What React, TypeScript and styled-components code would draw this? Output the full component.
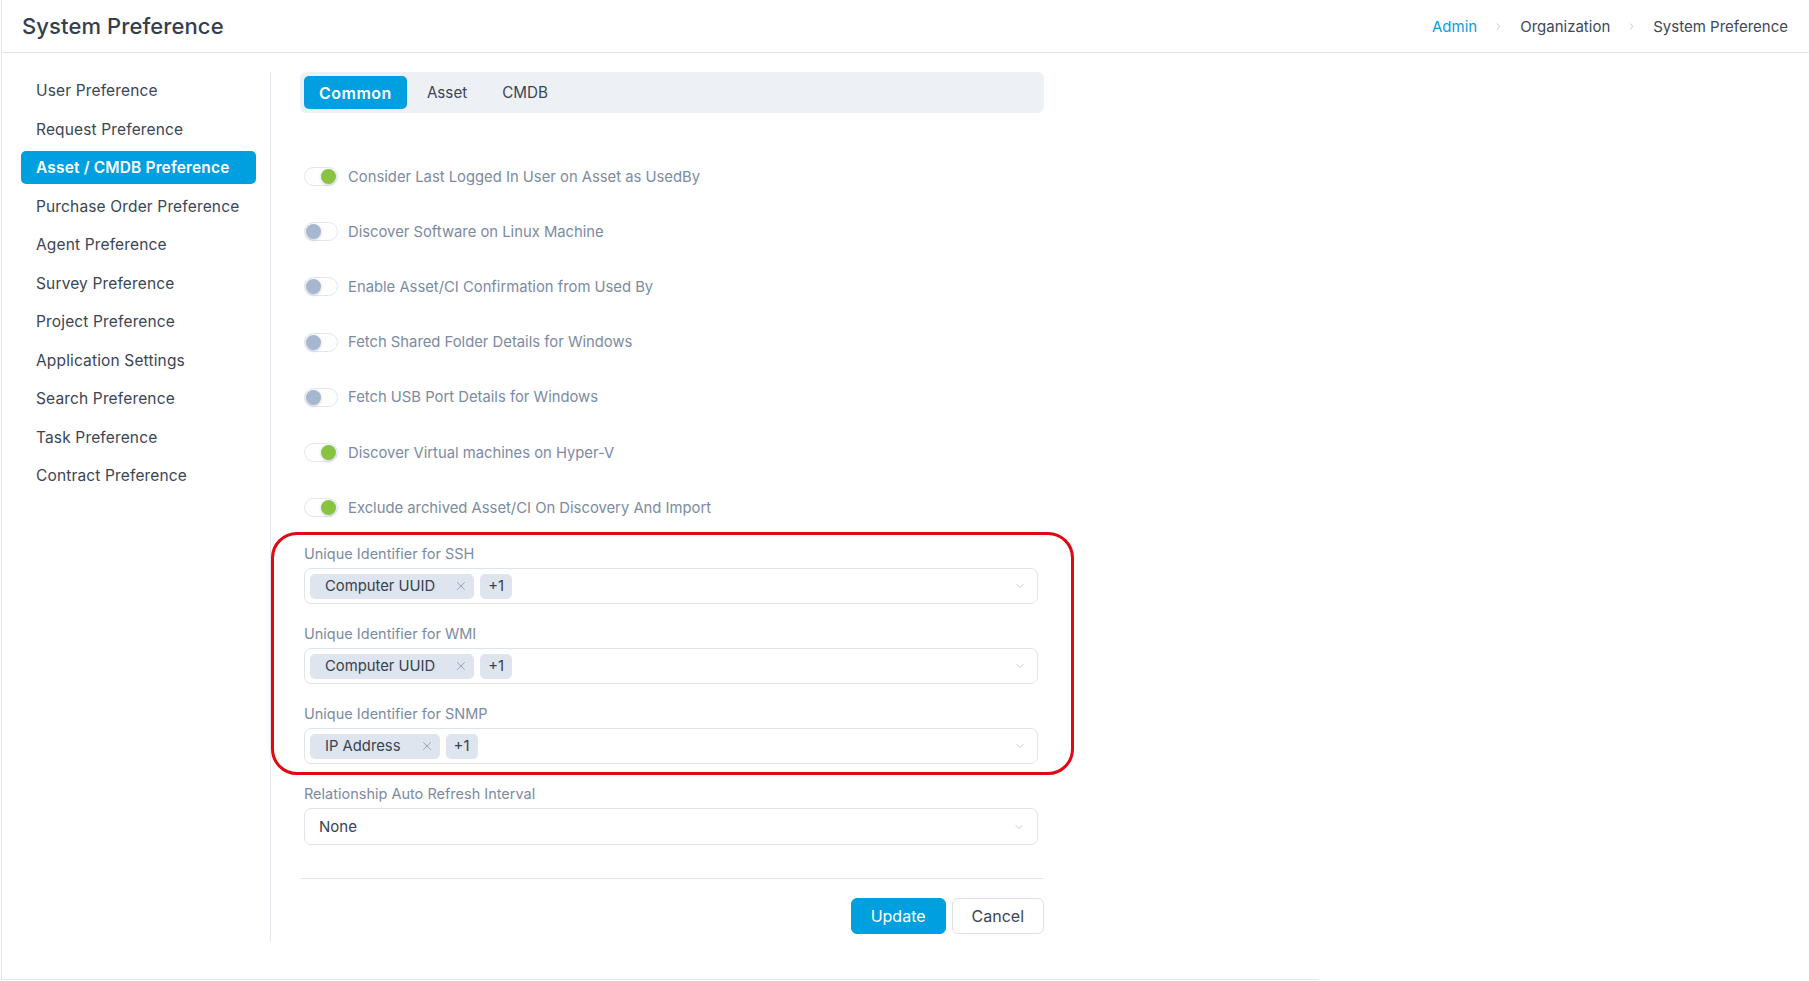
import styled, { createGlobalStyle } from "styled-components"
import { ChevronDown, ChevronRight, X } from "lucide-react"

const GlobalStyle = createGlobalStyle`
  body {
    margin: 0;
    background: #fff;
    font-family: Inter, "Open Sans", sans-serif;
    color: #364152;
  }
  * { box-sizing: border-box; }
`

const menu = [
  "User Preference",
  "Request Preference",
  "Asset / CMDB Preference",
  "Purchase Order Preference",
  "Agent Preference",
  "Survey Preference",
  "Project Preference",
  "Application Settings",
  "Search Preference",
  "Task Preference",
  "Contract Preference",
]

const toggles = [
  { label: "Consider Last Logged In User on Asset as UsedBy", on: true },
  { label: "Discover Software on Linux Machine", on: false },
  { label: "Enable Asset/CI Confirmation from Used By", on: false },
  { label: "Fetch Shared Folder Details for Windows", on: false },
  { label: "Fetch USB Port Details for Windows", on: false },
  { label: "Discover Virtual machines on Hyper-V", on: true },
  { label: "Exclude archived Asset/CI On Discovery And Import", on: true },
]

const identifiers = [
  { label: "Unique Identifier for SSH", value: "Computer UUID" },
  { label: "Unique Identifier for WMI", value: "Computer UUID" },
  { label: "Unique Identifier for SNMP", value: "IP Address" },
]

const App = () => {
  return (
    <Page>
      <GlobalStyle />
      <Header>
        <Title>System Preference</Title>
        <Crumbs>
          <Crumb $link>Admin</Crumb>
          <ChevronRight size={11} color="#a6b3c4" strokeWidth={1.6} />
          <Crumb>Organization</Crumb>
          <ChevronRight size={11} color="#a6b3c4" strokeWidth={1.6} />
          <Crumb>System Preference</Crumb>
        </Crumbs>
      </Header>

      <Body>
        <Sidebar>
          {menu.map((m) => (
            <MenuItem key={m} $active={m === "Asset / CMDB Preference"}>
              {m}
            </MenuItem>
          ))}
        </Sidebar>

        <Content>
          <Tabs>
            <Tab $active>Common</Tab>
            <Tab>Asset</Tab>
            <Tab>CMDB</Tab>
          </Tabs>

          <ToggleList>
            {toggles.map((t) => (
              <ToggleRow key={t.label}>
                <Track>
                  <Knob $on={t.on} />
                </Track>
                <ToggleLabel>{t.label}</ToggleLabel>
              </ToggleRow>
            ))}
          </ToggleList>

          <Fields>
            <Highlighted>
              {identifiers.map((f) => (
                <Field key={f.label}>
                  <FieldLabel>{f.label}</FieldLabel>
                  <SelectBox>
                    <Chips>
                      <Chip>
                        {f.value}
                        <X size={14} color="#8a97a9" strokeWidth={1.4} />
                      </Chip>
                      <Chip $count>+1</Chip>
                    </Chips>
                    <ChevronDown size={12} color="#a9b6c8" strokeWidth={1.5} />
                  </SelectBox>
                </Field>
              ))}
            </Highlighted>

            <Field>
              <FieldLabel>Relationship Auto Refresh Interval</FieldLabel>
              <SelectBox $plain>
                <Value>None</Value>
                <ChevronDown size={12} color="#a9b6c8" strokeWidth={1.5} />
              </SelectBox>
            </Field>
          </Fields>

          <Divider />

          <Actions>
            <Button $primary>Update</Button>
            <Button>Cancel</Button>
          </Actions>
        </Content>
      </Body>
    </Page>
  )
}

export default App

const Page = styled.div`
  margin-left: 1px;
  border-left: 1px solid #e3e8ef;
`

const Header = styled.div`
  height: 53px;
  padding: 0 21px 0 20px;
  border-bottom: 1px solid #e1e6ee;
  display: flex;
  align-items: center;
  justify-content: space-between;
`

const Title = styled.h1`
  margin: 0;
  font-size: 22px;
  font-weight: 500;
  color: #333e4e;
  letter-spacing: 0.1px;
`

const Crumbs = styled.div`
  display: flex;
  align-items: center;
  gap: 16px;
`

const Crumb = styled.span<{ $link?: boolean }>`
  font-size: 15px;
  color: ${(p) => (p.$link ? "#0b9ddc" : "#3d4859")};
`

const Body = styled.div`
  width: 1317px;
  display: flex;
  padding: 19px 0 37px;
  border-bottom: 1px solid #e3e8ef;
`

const Sidebar = styled.nav`
  flex: 0 0 269px;
  border-right: 1px solid #e3e8ef;
  padding: 2px 14px 0 19px;
  display: flex;
  flex-direction: column;
  gap: 5.5px;
`

const MenuItem = styled.div<{ $active?: boolean }>`
  height: 33px;
  display: flex;
  align-items: center;
  padding-left: 15px;
  border-radius: 5px;
  font-size: 15.5px;
  letter-spacing: 0.15px;
  font-weight: ${(p) => (p.$active ? 600 : 400)};
  color: ${(p) => (p.$active ? "#fff" : "#3a4556")};
  background: ${(p) => (p.$active ? "#009fdf" : "transparent")};
`

const Content = styled.main`
  width: 773px;
  padding: 0 0 8px 29px;
  display: flex;
  flex-direction: column;
`

const Tabs = styled.div`
  height: 41px;
  padding: 4px;
  background: #edf1f6;
  border-radius: 6px;
  display: flex;
  gap: 5px;
`

const Tab = styled.div<{ $active?: boolean }>`
  padding: 0 15px;
  display: flex;
  align-items: center;
  border-radius: 5px;
  font-size: ${(p) => (p.$active ? "16px" : "15.2px")};
  letter-spacing: ${(p) => (p.$active ? "0.5px" : "0")};
  font-weight: ${(p) => (p.$active ? 600 : 400)};
  color: ${(p) => (p.$active ? "#fff" : "#3a4556")};
  background: ${(p) => (p.$active ? "#009fdf" : "transparent")};
`

const ToggleList = styled.div`
  margin-top: 36px;
  padding-left: 4px;
  display: flex;
  flex-direction: column;
`

const ToggleRow = styled.div`
  height: 55.2px;
  display: flex;
  align-items: center;
  gap: 10px;
`

const Track = styled.div`
  width: 34px;
  height: 19px;
  border: 1px solid #e2e7ee;
  border-radius: 10px;
  background: #fff;
  padding: 1px;
  display: flex;
`

const Knob = styled.span<{ $on: boolean }>`
  width: 15px;
  height: 15px;
  border-radius: 50%;
  margin-left: ${(p) => (p.$on ? "auto" : "0")};
  background: ${(p) => (p.$on ? "#88c440" : "#a6b7cf")};
  box-shadow: 0 1px 3px rgba(40, 60, 90, 0.25);
`

const ToggleLabel = styled.span`
  font-size: 14.8px;
  color: #7c8aa2;
`

const Fields = styled.div`
  margin-top: 9px;
  padding: 0 6px 0 4px;
  display: flex;
  flex-direction: column;
  gap: 20px;
`

const Highlighted = styled.div`
  position: relative;
  display: flex;
  flex-direction: column;
  gap: 20px;

  &::after {
    content: "";
    position: absolute;
    left: -33px;
    right: -36px;
    top: -12px;
    bottom: -11px;
    border: 3px solid #e30613;
    border-radius: 26px;
    pointer-events: none;
  }
`

const Field = styled.div`
  display: flex;
  flex-direction: column;
  gap: 4px;
`

const FieldLabel = styled.label`
  height: 20px;
  line-height: 20px;
  font-size: 14.5px;
  color: #7c8aa2;
`

const SelectBox = styled.div<{ $plain?: boolean }>`
  height: ${(p) => (p.$plain ? "37px" : "36px")};
  border: 1px solid #dfe4ec;
  border-radius: 7px;
  display: flex;
  align-items: center;
  justify-content: space-between;
  padding: ${(p) => (p.$plain ? "0 12px 0 14px" : "0 11px 0 5px")};
`

const Chips = styled.div`
  display: flex;
  gap: 6px;
`

const Chip = styled.span<{ $count?: boolean }>`
  height: 25px;
  display: flex;
  align-items: center;
  justify-content: center;
  gap: 19px;
  padding: ${(p) => (p.$count ? "0" : "0 6px 0 15px")};
  width: ${(p) => (p.$count ? "32px" : "auto")};
  border-radius: 5px;
  background: #dfe5ee;
  font-size: 14.8px;
  color: #364152;
`

const Value = styled.span`
  font-size: 15px;
  color: #364152;
`

const Divider = styled.div`
  height: 1px;
  margin-top: 33px;
  background: #e3e7ee;
`

const Actions = styled.div`
  margin-top: 19px;
  display: flex;
  justify-content: flex-end;
  gap: 6px;
`

const Button = styled.button<{ $primary?: boolean }>`
  height: 36px;
  padding: 0 19px;
  border-radius: 6px;
  font-family: inherit;
  font-size: 16px;
  border: 1px solid ${(p) => (p.$primary ? "#009fdf" : "#dce2eb")};
  background: ${(p) => (p.$primary ? "#009fdf" : "#fff")};
  color: ${(p) => (p.$primary ? "#fff" : "#3a4556")};
`
